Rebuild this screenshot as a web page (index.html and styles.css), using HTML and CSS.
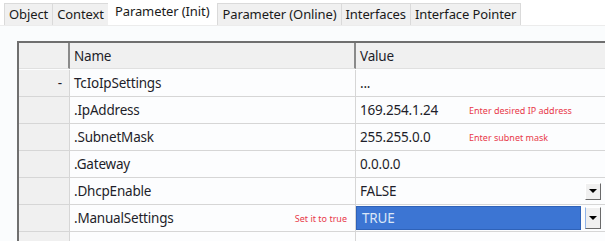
FILE: index.html
```html
<!DOCTYPE html>
<html lang="en">
<head>
  <meta charset="UTF-8">
  <title>Parameter (Init)</title>
  <link rel="stylesheet" href="styles.css">
</head>
<body>

<div id="tabs">
  <div class="tab">Object</div>
  <div class="tab">Context</div>
  <div class="tab active">Parameter (Init)</div>
  <div class="tab">Parameter (Online)</div>
  <div class="tab">Interfaces</div>
  <div class="tab">Interface Pointer</div>
</div>

<div id="panel">
  <div id="grid">
    <!-- Header -->
    <div class="head rowhead"></div>
    <div class="head">Name</div>
    <div class="head">Value</div>

    <div class="rowhead">-</div>
    <div class="cell">TcIoIpSettings</div>
    <div class="cell">...</div>

    <div class="rowhead"></div>
    <div class="cell">.IpAddress</div>
    <div class="cell value"><span class="val">169.254.1.24</span><span class="note">Enter desired IP address</span></div>

    <div class="rowhead"></div>
    <div class="cell">.SubnetMask</div>
    <div class="cell value"><span class="val">255.255.0.0</span><span class="note">Enter subnet mask</span></div>

    <div class="rowhead"></div>
    <div class="cell">.Gateway</div>
    <div class="cell">0.0.0.0</div>

    <div class="rowhead"></div>
    <div class="cell">.DhcpEnable</div>
    <div class="cell combo"><span class="val">FALSE</span><span class="drop"></span></div>

    <div class="rowhead"></div>
    <div class="cell name-note"><span>.ManualSettings</span><span class="note">Set it to true</span></div>
    <div class="cell combo"><span class="val selected">TRUE</span><span class="drop focus"></span></div>

    <div class="rowhead"></div>
    <div class="cell"></div>
    <div class="cell"></div>
  </div>
</div>

</body>
</html>
```

FILE: styles.css
```css
body {
  margin: 0;
  background-color: #ffffff;
  font-family: "Noto Sans", "Open Sans", sans-serif;
  color: #1e1e2a;
  overflow: hidden;
}

#tabs {
  display: flex;
  align-items: flex-end;
  height: 25px;
  padding-left: 4px;
  background-color: #ffffff;
}

.tab {
  height: 21px;
  padding: 0 4px;
  font-size: 13px;
  line-height: 21px;
  background-color: #f0f0f0;
  border: 1px solid #dadada;
  border-bottom: none;
  margin-right: -1px;
  color: #1a1a1a;
  letter-spacing: -0.1px;
}

.tab.active {
  height: 25px;
  line-height: 22px;
  background-color: #ffffff;
  border-color: #ffffff;
  padding: 0 6px;
  margin: 0 1px 0 0;
}

#panel {
  background-color: #fafcfd;
  border-top: 1px solid #ececec;
  padding: 15px 0 0 17px;
  height: 200px;
  overflow: hidden;
}

#grid {
  display: grid;
  grid-template-columns: 51px 286px 250px;
  grid-auto-rows: 27px;
  border-left: 2px solid #6f6f6f;
  border-top: 2px solid #6f6f6f;
  background-color: #fcfdfe;
}

#grid > div {
  border-bottom: 1px solid #d6d6d6;
  border-right: 1px solid #d6d6d6;
  font-size: 13.5px;
  display: flex;
  align-items: center;
  padding-left: 4px;
  box-sizing: border-box;
  white-space: nowrap;
  letter-spacing: -0.2px;
}

#grid > .head {
  background-color: #f0f0f0;
  border-right: 2px solid #8a8a8a;
  border-bottom: 1px solid #e0e0e0;
  height: 26px;
}

#grid > .head:nth-child(3) {
  border-right: 1px solid #d6d6d6;
}

#grid > .rowhead {
  background-color: #f0f0f0;
  justify-content: flex-end;
  padding-right: 7px;
}

.value .val {
  width: 109px;
}

.note {
  font-size: 9px;
  color: #e8394a;
  letter-spacing: 0;
}

.name-note {
  justify-content: space-between;
  padding-right: 8px;
}

.combo {
  padding-right: 4px;
}

.combo .val {
  flex: 1;
}

.combo .val.selected {
  align-self: stretch;
  margin: 1px 4px 1px -4px;
  padding-left: 5px;
  display: flex;
  align-items: center;
  background-color: #3c75d3;
  color: #d9e6f7;
  border: 1px solid #2f62b8;
}

.drop {
  width: 16px;
  height: 17px;
  background-color: #f0f0f0;
  border-right: 1px solid #6a6a6a;
  border-bottom: 1px solid #6a6a6a;
  border-top: 1px solid #ffffff;
  border-left: 1px solid #ffffff;
  display: flex;
  align-items: center;
  justify-content: center;
  box-sizing: border-box;
}

.drop::after {
  content: "";
  border-left: 4px solid transparent;
  border-right: 4px solid transparent;
  border-top: 4px solid #000000;
}

.drop.focus {
  height: 22px;
  border-left: 1px solid #8fb3e8;
}
```
